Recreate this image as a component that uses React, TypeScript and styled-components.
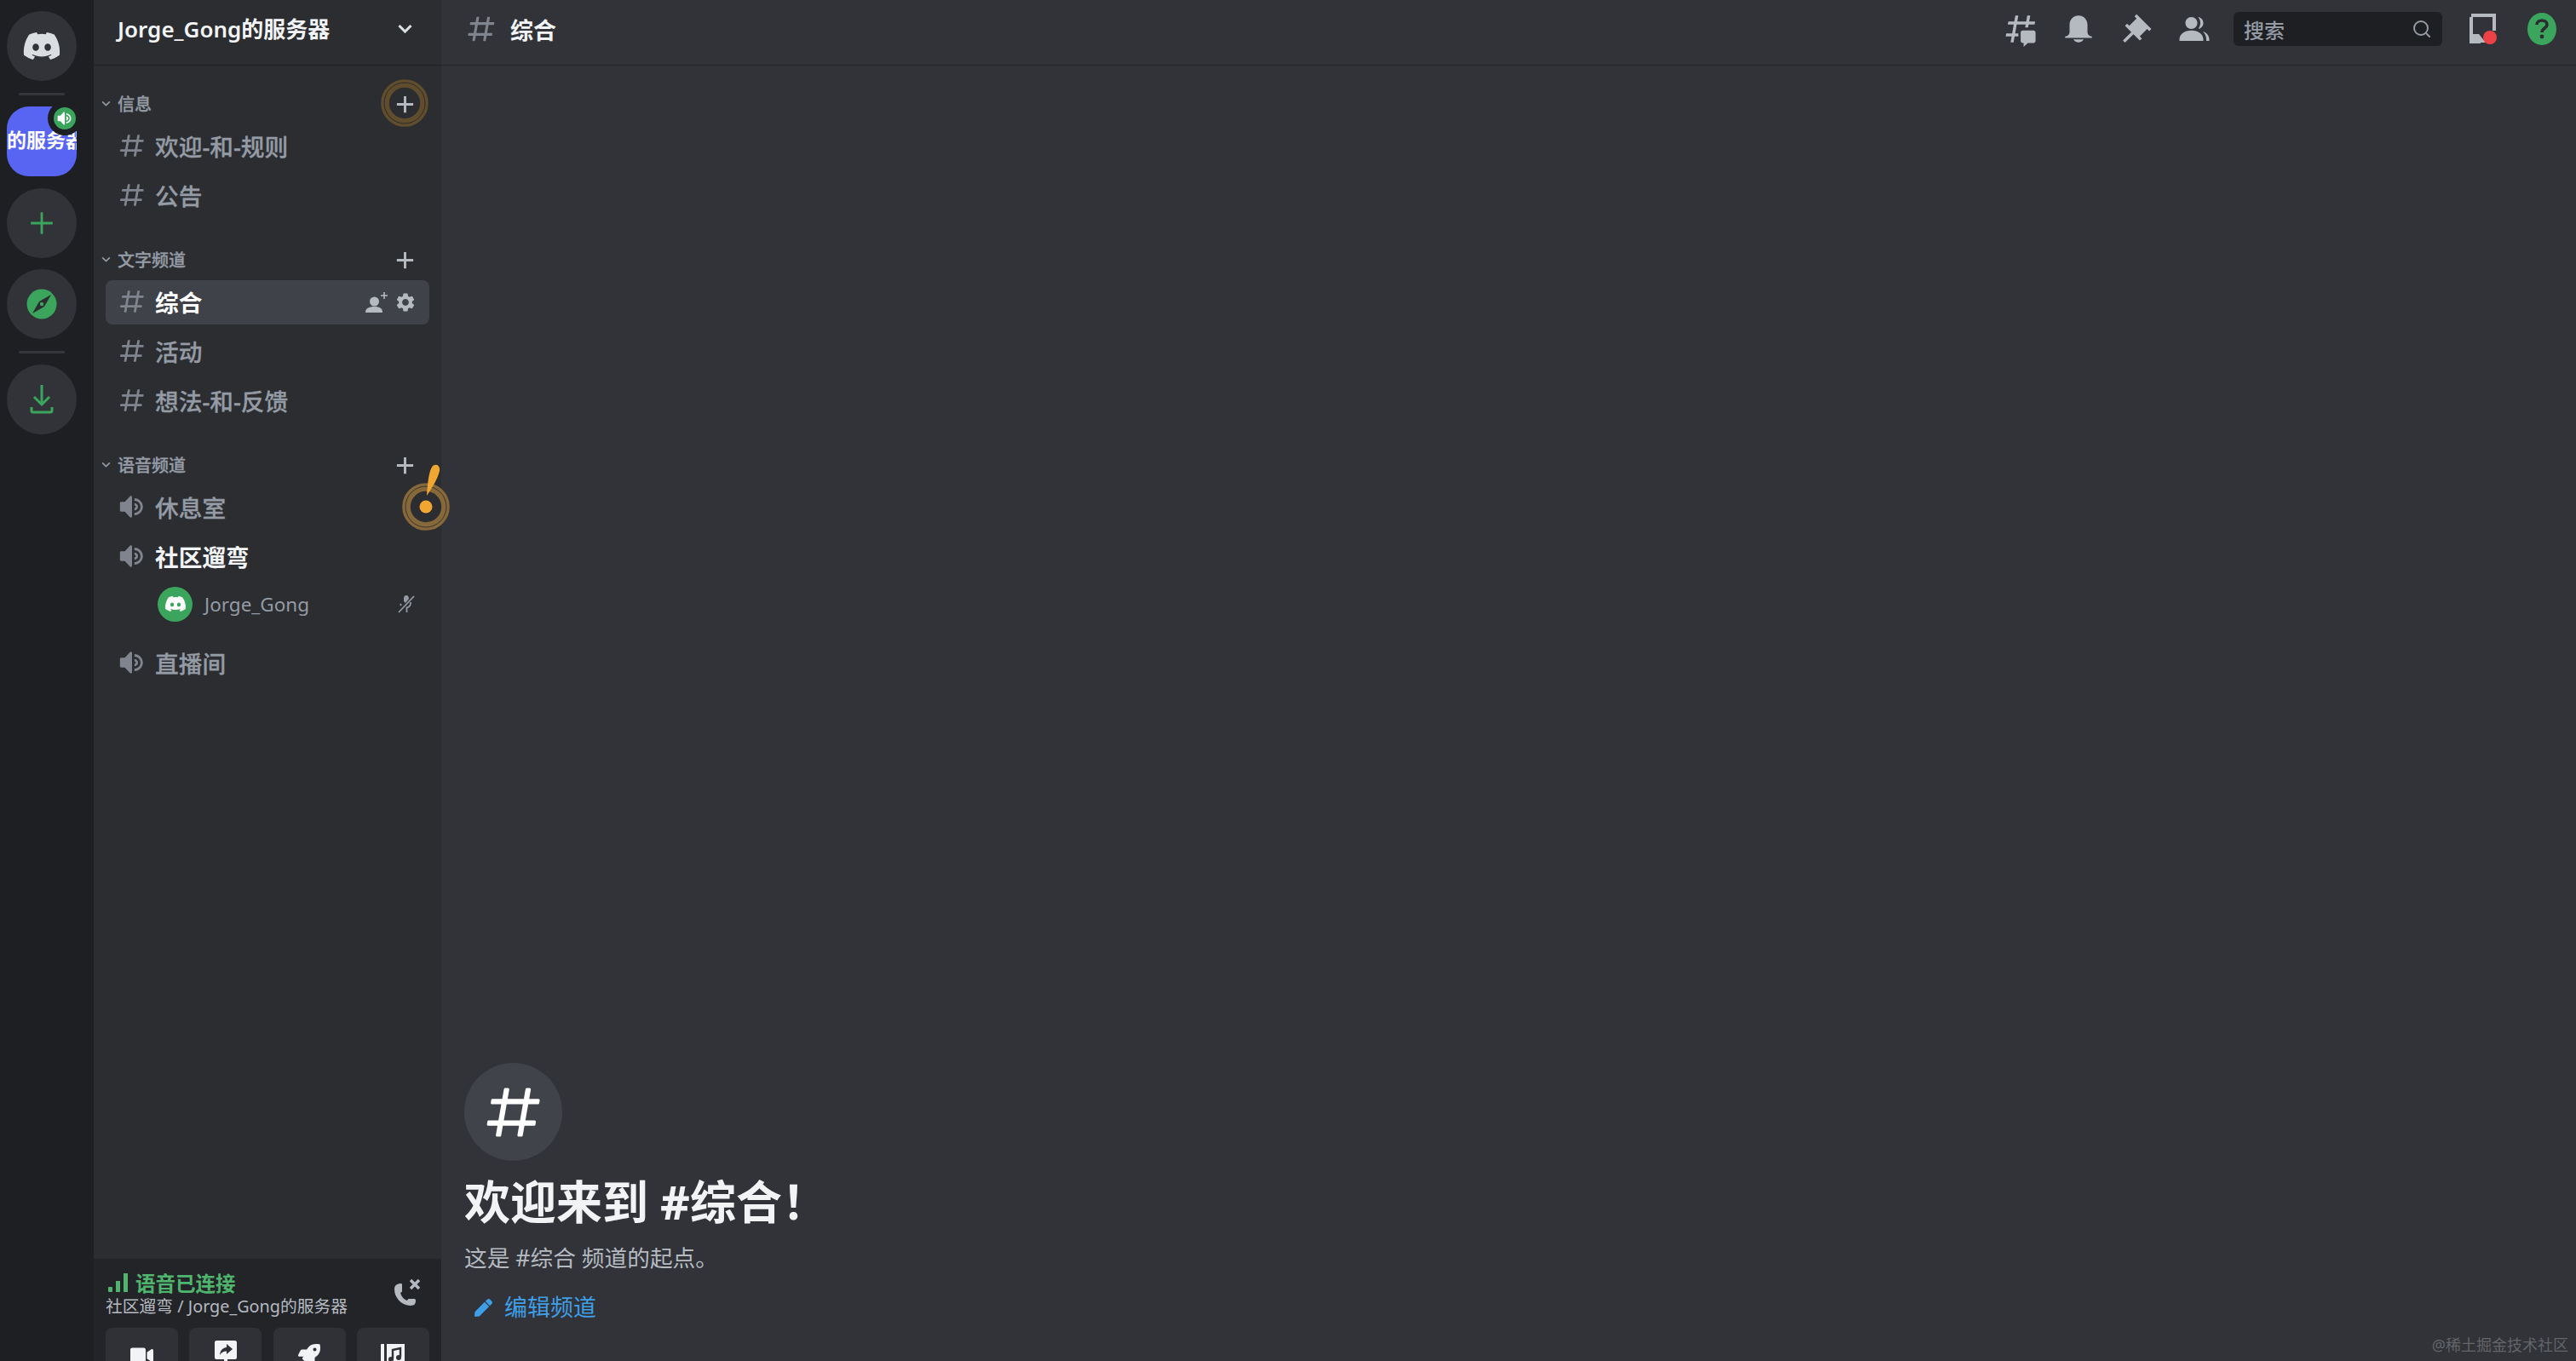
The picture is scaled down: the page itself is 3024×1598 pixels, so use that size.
import React from "react";
import styled, { createGlobalStyle } from "styled-components";
import { FaDiscord, FaRocket, FaVideo, FaPen } from "react-icons/fa";
import { MdSettings } from "react-icons/md";
import { Search } from "lucide-react";

const HASH =
  "M5.88657 21C5.57547 21 5.3399 20.7189 5.39427 20.4126L6.00001 17H2.59511C2.28449 17 2.04905 16.7198 2.10259 16.4138L2.27759 15.4138C2.31946 15.1746 2.52722 15 2.77011 15H6.35001L7.41001 9H4.00511C3.69449 9 3.45905 8.71977 3.51259 8.41381L3.68759 7.41381C3.72946 7.17456 3.93722 7 4.18011 7H7.76001L8.39677 3.41262C8.43914 3.17391 8.64664 3 8.88907 3H9.87344C10.1845 3 10.4201 3.28107 10.3657 3.58738L9.76001 7H15.76L16.3968 3.41262C16.4391 3.17391 16.6466 3 16.8891 3H17.8734C18.1845 3 18.4201 3.28107 18.3657 3.58738L17.76 7H21.1649C21.4755 7 21.711 7.28023 21.6574 7.58619L21.4824 8.58619C21.4406 8.82544 21.2328 9 20.9899 9H17.41L16.35 15H19.7549C20.0655 15 20.301 15.2802 20.2474 15.5862L20.0724 16.5862C20.0306 16.8254 19.8228 17 19.5799 17H16L15.3632 20.5874C15.3209 20.8261 15.1134 21 14.8709 21H13.8866C13.5755 21 13.3399 20.7189 13.3943 20.4126L14 17H8.00001L7.36325 20.5874C7.32088 20.8261 7.11337 21 6.87094 21H5.88657ZM9.41045 9L8.35045 15H14.3504L15.4104 9H9.41045Z";
const SPEAKER =
  "M11.383 3.07904C11.009 2.92504 10.579 3.01004 10.293 3.29604L6 8.00204H3C2.45 8.00204 2 8.45304 2 9.00204V15.002C2 15.552 2.45 16.002 3 16.002H6L10.293 20.71C10.579 20.996 11.009 21.082 11.383 20.927C11.757 20.772 12 20.407 12 20.001V4.00204C12 3.59904 11.757 3.23204 11.383 3.07904ZM14 5.00195V7.00195C16.757 7.00195 19 9.24595 19 12.002C19 14.759 16.757 17.002 14 17.002V19.002C17.86 19.002 21 15.863 21 12.002C21 8.14295 17.86 5.00195 14 5.00195ZM14 9.00195C15.654 9.00195 17 10.349 17 12.002C17 13.657 15.654 15.002 14 15.002V13.002C14.551 13.002 15 12.553 15 12.002C15 11.451 14.551 11.002 14 11.002V9.00195Z";

const GlobalStyle = createGlobalStyle`
  html, body {
    margin: 0;
    height: 100%;
    background: #313338;
  }
  #root {
    height: 100%;
  }
  * {
    box-sizing: border-box;
  }
  body {
    font-family: "Noto Sans", "Noto Sans CJK SC", sans-serif;
  }
`;

const Shell = styled.div`
  display: flex;
  width: 3024px;
  height: 1598px;
  overflow: hidden;
  position: relative;
`;

const Rail = styled.nav`
  width: 110px;
  flex-shrink: 0;
  background: #1e1f22;
  display: flex;
  flex-direction: column;
  align-items: flex-start;
  gap: 13.5px;
  padding: 13px 0 0 8px;
`;

const RailCircle = styled.div`
  width: 82px;
  height: 82px;
  border-radius: 50%;
  background: #313338;
  display: flex;
  align-items: center;
  justify-content: center;
  flex-shrink: 0;
`;

const RailSeparator = styled.div`
  width: 54px;
  height: 3px;
  margin-left: 14px;
  background: #35363c;
  border-radius: 1px;
  flex-shrink: 0;
`;

const ServerWrap = styled.div`
  position: relative;
  width: 82px;
  height: 82px;
  flex-shrink: 0;
`;

const ServerIcon = styled.div`
  width: 82px;
  height: 82px;
  border-radius: 26px;
  background: #5865f2;
  color: #fff;
  font-size: 23px;
  font-weight: 700;
  line-height: 78px;
  white-space: nowrap;
  overflow: hidden;
`;

const VoiceBadge = styled.div`
  position: absolute;
  top: -6px;
  right: -6px;
  width: 40px;
  height: 40px;
  border-radius: 50%;
  background: #1e1f22;
  display: flex;
  align-items: center;
  justify-content: center;
  &::before {
    content: "";
    position: absolute;
    inset: 7px;
    border-radius: 50%;
    background: #3ba55d;
  }
  svg {
    position: relative;
  }
`;

const Sidebar = styled.aside`
  width: 408px;
  flex-shrink: 0;
  background: #2b2d31;
  display: flex;
  flex-direction: column;
  position: relative;
  z-index: 2;
`;

const ServerHeader = styled.header`
  height: 76px;
  flex-shrink: 0;
  display: flex;
  align-items: center;
  justify-content: space-between;
  padding: 0 32px 10px 28px;
  color: #f2f3f5;
  font-size: 26px;
  font-weight: 600;
  box-shadow: 0 1px 0 rgba(4, 4, 5, 0.2), 0 1.5px 0 rgba(6, 6, 7, 0.05);
`;

const ChannelList = styled.div`
  flex: 1;
  min-height: 0;
  padding-top: 28px;
  display: flex;
  flex-direction: column;
  gap: 31px;
`;

const Section = styled.section`
  display: flex;
  flex-direction: column;
  gap: 6px;
`;

const CategoryRow = styled.div`
  height: 36px;
  display: flex;
  align-items: center;
  padding: 0 32px 2px 8px;
  gap: 7px;
  color: #949ba4;
  font-size: 20px;
  font-weight: 500;
  -webkit-text-stroke: 0.3px #949ba4;
`;

const CategoryName = styled.span`
  flex: 1;
`;

const AddButton = styled.span`
  position: relative;
  width: 21px;
  height: 21px;
  display: flex;
  top: 1px;
`;

const RingSpot = styled.svg`
  position: absolute;
  left: -18px;
  top: -19px;
`;

const ChannelRow = styled.div<{ $active?: boolean }>`
  position: relative;
  height: 52px;
  margin: 0 14px;
  padding: 0 15px 3px 14px;
  display: flex;
  align-items: center;
  gap: 10px;
  border-radius: 8px;
  background: ${(p) => (p.$active ? "#404249" : "transparent")};
  color: ${(p) => (p.$active ? "#fff" : "#949ba4")};
  font-size: 27.7px;
  font-weight: ${(p) => (p.$active ? 600 : 500)};
`;

const ChannelName = styled.span<{ $joined?: boolean; $active?: boolean }>`
  flex: 1;
  ${(p) =>
    p.$joined
      ? "color: #f2f3f5; font-weight: 600;"
      : !p.$active && "-webkit-text-stroke: 0.3px #949ba4;"}
`;

const RowActions = styled.div`
  display: flex;
  align-items: center;
  gap: 7px;
  margin-top: 3px;
`;

const VoiceUser = styled.div`
  height: 46px;
  margin: 0 31px 15px 75px;
  display: flex;
  align-items: center;
  gap: 14px;
  color: #949ba4;
  font-size: 22.5px;
`;

const UserAvatar = styled.div`
  width: 41px;
  height: 41px;
  border-radius: 50%;
  background: #3ba55d;
  display: flex;
  align-items: center;
  justify-content: center;
  flex-shrink: 0;
`;

const UserName = styled.span`
  flex: 1;
`;

const HintMark = styled.svg`
  position: absolute;
  right: -24px;
  top: -25px;
`;

const ConnectionPanel = styled.div`
  height: 120px;
  flex-shrink: 0;
  background: #232428;
  padding: 13px 14px 0;
  overflow: hidden;
`;

const ConnectionTop = styled.div`
  display: flex;
  align-items: center;
  justify-content: space-between;
  padding-right: 10px;
`;

const ConnectionStatus = styled.div`
  display: flex;
  align-items: center;
  gap: 9px;
  padding-left: 3px;
  height: 30px;
  color: #4fb56e;
  font-size: 23.5px;
  font-weight: 700;
`;

const ConnectionChannel = styled.div`
  color: #b5bac1;
  font-size: 19.8px;
  height: 28px;
  line-height: 26px;
  white-space: nowrap;
`;

const HangUp = styled.svg`
  margin-bottom: 6px;
`;

const PanelButtons = styled.div`
  display: grid;
  grid-template-columns: repeat(4, 85px);
  justify-content: space-between;
  margin-top: 10px;
`;

const PanelButton = styled.div`
  height: 64px;
  border-radius: 8px;
  background: #2f3136;
  display: flex;
  align-items: center;
  justify-content: center;
  color: #f2f3f5;
`;

const Main = styled.main`
  flex: 1;
  min-width: 0;
  background: #313338;
  display: flex;
  flex-direction: column;
  position: relative;
`;

const TopBar = styled.header`
  height: 76px;
  flex-shrink: 0;
  display: flex;
  align-items: center;
  padding: 0 23px 8px 28px;
  box-shadow: 0 1px 0 rgba(4, 4, 5, 0.2), 0 1.5px 0 rgba(6, 6, 7, 0.05);
`;

const TopTitle = styled.h1`
  flex: 1;
  margin: 0 0 0 15px;
  color: #f2f3f5;
  font-size: 27px;
  font-weight: 600;
`;

const TopActions = styled.div`
  display: flex;
  align-items: center;
  gap: 26px;
  color: #b5bac1;
`;

const SearchBox = styled.div`
  width: 245px;
  height: 40px;
  border-radius: 6px;
  background: #1e1f22;
  display: flex;
  align-items: center;
  justify-content: space-between;
  padding: 0 12px;
  margin: 0 6px 0 -1px;
  color: #949ba4;
  font-size: 24px;
  font-weight: 500;
`;

const HelpIcon = styled.svg`
  margin-left: 10px;
`;

const Welcome = styled.div`
  margin-top: auto;
  padding: 0 0 44px 27px;
  display: flex;
  flex-direction: column;
  align-items: flex-start;
`;

const WelcomeBadge = styled.div`
  width: 115px;
  height: 115px;
  border-radius: 50%;
  background: #41434a;
  display: flex;
  align-items: center;
  justify-content: center;
`;

const WelcomeTitle = styled.h2`
  margin: 10px 0 0;
  color: #f2f3f5;
  font-size: 54px;
  line-height: 76px;
  font-weight: 700;
  white-space: nowrap;
`;

const WelcomeText = styled.p`
  margin: 10px 0 0;
  color: #b5bac1;
  font-size: 26.7px;
  line-height: 36px;
`;

const EditLink = styled.a`
  display: flex;
  align-items: center;
  gap: 14px;
  margin: 21px 0 0 12px;
  color: #3f9fe6;
  font-size: 27px;
  line-height: 38px;
`;

const Watermark = styled.span`
  position: absolute;
  right: 9px;
  bottom: 7px;
  color: rgba(255, 255, 255, 0.25);
  font-size: 18px;
`;

const Glyph = ({ d, size, color }: { d: string; size: number; color: string }) => (
  <svg width={size} height={size} viewBox="0 0 24 24" fill={color} style={{ flexShrink: 0 }}>
    <path fillRule="evenodd" clipRule="evenodd" d={d} />
  </svg>
);

const Caret = ({ size, width, color }: { size: number; width: number; color: string }) => (
  <svg width={size} height={size} viewBox="0 0 24 24" fill="none" stroke={color} strokeWidth={width}>
    <path d="M4 8 L12 16 L20 8" />
  </svg>
);

const Plus = ({ size, width, color }: { size: number; width: number; color: string }) => (
  <svg width={size} height={size} viewBox="0 0 24 24" fill="none" stroke={color} strokeWidth={width}>
    <path d="M12 1V23M1 12H23" />
  </svg>
);

const Ring = ({ color }: { color: string }) => (
  <RingSpot width="56" height="56" viewBox="0 0 56 56" fill="none">
    <circle cx="28" cy="28" r="23" stroke={color} strokeWidth="9.6" />
    <circle cx="28" cy="28" r="24" stroke="#2e2b28" strokeWidth="1" />
  </RingSpot>
);

const categoryHead = (name: string, ring?: boolean) => (
  <CategoryRow>
    <Caret size={13} width={3} color="#949ba4" />
    <CategoryName>{name}</CategoryName>
    <AddButton>
      <Plus size={21} width={3.4} color="#b5bac1" />
      {ring && <Ring color="#5f4d2d" />}
    </AddButton>
  </CategoryRow>
);

export default function App() {
  return (
    <Shell>
      <GlobalStyle />
      <Rail>
        <RailCircle>
          <FaDiscord size={46} color="#dbdee1" />
        </RailCircle>
        <RailSeparator />
        <ServerWrap>
          <ServerIcon>的服务器</ServerIcon>
          <VoiceBadge>
            <Glyph d={SPEAKER} size={20} color="#fff" />
          </VoiceBadge>
        </ServerWrap>
        <RailCircle>
          <Plus size={28} width={2.4} color="#3ba55d" />
        </RailCircle>
        <RailCircle>
          <svg width="36" height="36" viewBox="0 0 36 36">
            <circle cx="18" cy="18" r="17.5" fill="#3ba55d" />
            <path d="M29 7 L21 21 L15 15 Z" fill="#2b2d31" />
            <path d="M7 29 L15 15 L21 21 Z" fill="#2b2d31" />
            <circle cx="18" cy="18" r="2.2" fill="#3ba55d" />
          </svg>
        </RailCircle>
        <RailSeparator />
        <RailCircle>
          <svg width="28" height="36" viewBox="0 0 28 36" fill="none" stroke="#3ba55d" strokeWidth="3">
            <path d="M14 1V23M5 15L14 24L23 15" />
            <path d="M2 27V31C2 32 2.6 33 4 33H24C25.4 33 26 32 26 31V27" />
          </svg>
        </RailCircle>
      </Rail>

      <Sidebar>
        <ServerHeader>
          <span>Jorge_Gong的服务器</span>
          <Caret size={21} width={3.6} color="#dbdee1" />
        </ServerHeader>
        <ChannelList>
          <Section>
            {categoryHead("信息", true)}
            <ChannelRow>
              <Glyph d={HASH} size={34} color="#80848e" />
              <ChannelName>欢迎-和-规则</ChannelName>
            </ChannelRow>
            <ChannelRow>
              <Glyph d={HASH} size={34} color="#80848e" />
              <ChannelName>公告</ChannelName>
            </ChannelRow>
          </Section>
          <Section>
            {categoryHead("文字频道")}
            <ChannelRow $active>
              <Glyph d={HASH} size={34} color="#80848e" />
              <ChannelName $active>综合</ChannelName>
              <RowActions>
                <svg width="27" height="24" viewBox="0 0 27 24" fill="#b5bac1">
                  <circle cx="10.5" cy="11" r="5.5" />
                  <path d="M0 24C0 19 4 17 10.5 17S20 19 20 24Z" />
                  <path d="M22 0V8M18 4H26" stroke="#b5bac1" strokeWidth="1.6" fill="none" />
                </svg>
                <MdSettings size={26} color="#b5bac1" />
              </RowActions>
            </ChannelRow>
            <ChannelRow>
              <Glyph d={HASH} size={34} color="#80848e" />
              <ChannelName>活动</ChannelName>
            </ChannelRow>
            <ChannelRow>
              <Glyph d={HASH} size={34} color="#80848e" />
              <ChannelName>想法-和-反馈</ChannelName>
            </ChannelRow>
          </Section>
          <Section>
            {categoryHead("语音频道")}
            <ChannelRow>
              <Glyph d={SPEAKER} size={34} color="#80848e" />
              <ChannelName>休息室</ChannelName>
              <HintMark width="56" height="78" viewBox="0 0 56 78" fill="none">
                <circle cx="28" cy="50" r="23" stroke="#86683a" strokeWidth="9.6" />
                <circle cx="28" cy="50" r="24" stroke="#3a3630" strokeWidth="1" />
                <circle cx="28" cy="50" r="7.5" fill="#f0a732" />
                <path d="M29 37 C30 24 31 8 36 2 C40 -1 45 1 44 8 C42 17 35 28 29 37 Z" fill="#f0a732" />
              </HintMark>
            </ChannelRow>
            <ChannelRow>
              <Glyph d={SPEAKER} size={34} color="#80848e" />
              <ChannelName $joined>社区遛弯</ChannelName>
            </ChannelRow>
            <VoiceUser>
              <UserAvatar>
                <FaDiscord size={26} color="#fff" />
              </UserAvatar>
              <UserName>Jorge_Gong</UserName>
              <svg width="20" height="22" viewBox="0 0 20 22" fill="none" stroke="#949ba4">
                <path d="M9 10L13 5C13 2.5 11.5 1 10 1C8 1 7 2.5 7 4.5V8Z" fill="#949ba4" stroke="none" />
                <path d="M1 21L19 2" strokeWidth="1.8" />
                <path d="M3 11L4 13M15 9C15.5 12 13.5 15 10.5 15.5V21" strokeWidth="1.8" />
              </svg>
            </VoiceUser>
            <ChannelRow>
              <Glyph d={SPEAKER} size={34} color="#80848e" />
              <ChannelName>直播间</ChannelName>
            </ChannelRow>
          </Section>
        </ChannelList>
        <ConnectionPanel>
          <ConnectionTop>
            <div>
              <ConnectionStatus>
                <svg width="23" height="22" viewBox="0 0 23 22" fill="#4fb56e">
                  <rect x="0" y="16" width="5" height="6" rx="1" />
                  <rect x="9" y="9" width="5" height="13" />
                  <rect x="18" y="0" width="5" height="22" />
                </svg>
                语音已连接
              </ConnectionStatus>
              <ConnectionChannel>社区遛弯 / Jorge_Gong的服务器</ConnectionChannel>
            </div>
            <HangUp width="31" height="32" viewBox="0 0 31 32" fill="#b5bac1">
              <path d="M8 6C3 6 0 8 0 13C0 23 9 32 19 32C24 32 25 29 25 26C25 24.5 24 24 23 24L17 24C16 24 15.5 25 15 26C11 25 8 21 7 17C8 16.5 9 16 9 15V8C9 7 9 6 8 6Z" />
              <path d="M19 2L29 12M29 2L19 12" stroke="#b5bac1" strokeWidth="3.4" fill="none" />
            </HangUp>
          </ConnectionTop>
          <PanelButtons>
            <PanelButton>
              <FaVideo size={27} />
            </PanelButton>
            <PanelButton>
              <svg width="26" height="34" viewBox="0 0 26 34" fill="#f2f3f5">
                <path d="M2 0H24C25 0 26 1 26 2V20C26 21 25 22 24 22H2C1 22 0 21 0 20V2C0 1 1 0 2 0Z" />
                <path d="M11 22H15V28H11ZM6 28H20V31H6Z" />
                <path d="M14 4L21 10L14 16V12.5C10 12.5 8 14 6 17C6.5 12 9 8.5 14 8Z" fill="#2f3136" />
              </svg>
            </PanelButton>
            <PanelButton>
              <FaRocket size={26} />
            </PanelButton>
            <PanelButton>
              <svg width="28" height="26" viewBox="0 0 28 26" fill="#f2f3f5">
                <path d="M0 1C0 .5.5 0 1 0H4V26H1C.5 26 0 25.5 0 25Z" />
                <path d="M7 0H28V26H7Z" />
                <path d="M14 17V7L23 5V15" stroke="#2f3136" strokeWidth="2.4" fill="none" />
                <circle cx="12" cy="18" r="3" fill="#2f3136" />
                <circle cx="21" cy="16" r="3" fill="#2f3136" />
              </svg>
            </PanelButton>
          </PanelButtons>
        </ConnectionPanel>
      </Sidebar>

      <Main>
        <TopBar>
          <Glyph d={HASH} size={38} color="#80848e" />
          <TopTitle>综合</TopTitle>
          <TopActions>
            <svg width="42" height="42" viewBox="0 0 24 24" fill="#b5bac1">
              <path d="M5.43309 21C5.35842 21 5.30189 20.9325 5.31494 20.859L5.99991 17H2.14274C2.06819 17 2.01168 16.9327 2.02453 16.8593L2.33253 15.0993C2.34258 15.0419 2.39244 15 2.45074 15H6.34991L7.40991 9H3.55274C3.47819 9 3.42168 8.93274 3.43453 8.85931L3.74253 7.09931C3.75258 7.04189 3.80244 7 3.86074 7H7.75991L8.45234 3.09903C8.46251 3.04174 8.51231 3 8.57049 3H10.3267C10.4014 3 10.4579 3.06746 10.4449 3.14097L9.75991 7H15.7599L16.4523 3.09903C16.4625 3.04174 16.5123 3 16.5705 3H18.3267C18.4014 3 18.4579 3.06746 18.4449 3.14097L17.7599 7H21.6171C21.6916 7 21.7481 7.06725 21.7353 7.14069L21.4273 8.90069C21.4172 8.95811 21.3674 9 21.3091 9H17.4099L17.0585 11H15.0585L15.4099 9H9.40991L8.34991 15H10.5V17H7.99991L7.30749 20.901C7.29732 20.9583 7.24752 21 7.18934 21H5.43309Z" />
              <path d="M13.44 12.98C12.67 12.98 12.04 13.61 12.04 14.38V19.98C12.04 20.75 12.67 21.38 13.44 21.38H14.04V23.98L16.9 21.38H20.64C21.41 21.38 22.04 20.75 22.04 19.98V14.38C22.04 13.61 21.41 12.98 20.64 12.98H13.44Z" />
            </svg>
            <Glyph
              size={42}
              color="#b5bac1"
              d="M18 9V14C18 15.657 19.344 17 21 17V18H3V17C4.656 17 6 15.657 6 14V9C6 5.686 8.686 3 12 3C15.314 3 18 5.686 18 9ZM11.9999 21C10.5239 21 9.24993 20.19 8.55493 19H15.4449C14.7499 20.19 13.4759 21 11.9999 21Z"
            />
            <Glyph
              size={42}
              color="#b5bac1"
              d="M22 12L12.101 2.10101L10.686 3.51401L12.101 4.92901L7.15096 9.87801V9.88001L5.73596 8.46501L4.32196 9.88001L8.56496 14.122L2.90796 19.778L4.32196 21.192L9.97896 15.536L14.222 19.778L15.636 18.364L14.222 16.95L19.171 12H19.172L20.586 13.414L22 12Z"
            />
            <Glyph
              size={42}
              color="#b5bac1"
              d="M14 8.00598C14 10.211 12.206 12.006 10 12.006C7.795 12.006 6 10.211 6 8.00598C6 5.80098 7.794 4.00598 10 4.00598C12.206 4.00598 14 5.80098 14 8.00598ZM2 19.006C2 15.473 5.29 13.006 10 13.006C14.711 13.006 18 15.473 18 19.006V20.006H2V19.006ZM20 20.006H22V19.006C22 16.443 20.27 14.442 17.521 13.535C19.062 14.913 20 16.806 20 19.006V20.006ZM14.883 11.908C16.666 11.504 18 9.908 18 8.006C18 5.969 16.469 4.282 14.497 4.037C15.432 5.095 16 6.485 16 8.006C16 9.449 15.489 10.774 14.638 11.81C14.72 11.842 14.802 11.874 14.883 11.908Z"
            />
            <SearchBox>
              <span>搜索</span>
              <Search size={24} color="#949ba4" />
            </SearchBox>
            <svg width="32" height="36" viewBox="0 0 32 36" fill="none">
              <path d="M2 4V33H13" stroke="#b5bac1" strokeWidth="4" />
              <path d="M2 2H29V20" stroke="#b5bac1" strokeWidth="4" />
              <path d="M2 24H11L19 34H2Z" fill="#b5bac1" />
              <circle cx="24" cy="28" r="8" fill="#ed4245" />
            </svg>
            <HelpIcon width="34" height="38" viewBox="0 0 34 38">
              <ellipse cx="17" cy="19" rx="17" ry="19" fill="#3ba55d" />
              <path d="M11 14C11 10.5 14 9 17 9C20 9 23 10.5 23 14C23 18 17 18 17 23" fill="none" stroke="#2b2d31" strokeWidth="3.6" />
              <circle cx="17" cy="28" r="2.4" fill="#2b2d31" />
            </HelpIcon>
          </TopActions>
        </TopBar>
        <Welcome>
          <WelcomeBadge>
            <Glyph d={HASH} size={76} color="#fff" />
          </WelcomeBadge>
          <WelcomeTitle>欢迎来到 #综合！</WelcomeTitle>
          <WelcomeText>这是 #综合 频道的起点。</WelcomeText>
          <EditLink>
            <FaPen size={21} />
            编辑频道
          </EditLink>
        </Welcome>
        <Watermark>@稀土掘金技术社区</Watermark>
      </Main>
    </Shell>
  );
}
